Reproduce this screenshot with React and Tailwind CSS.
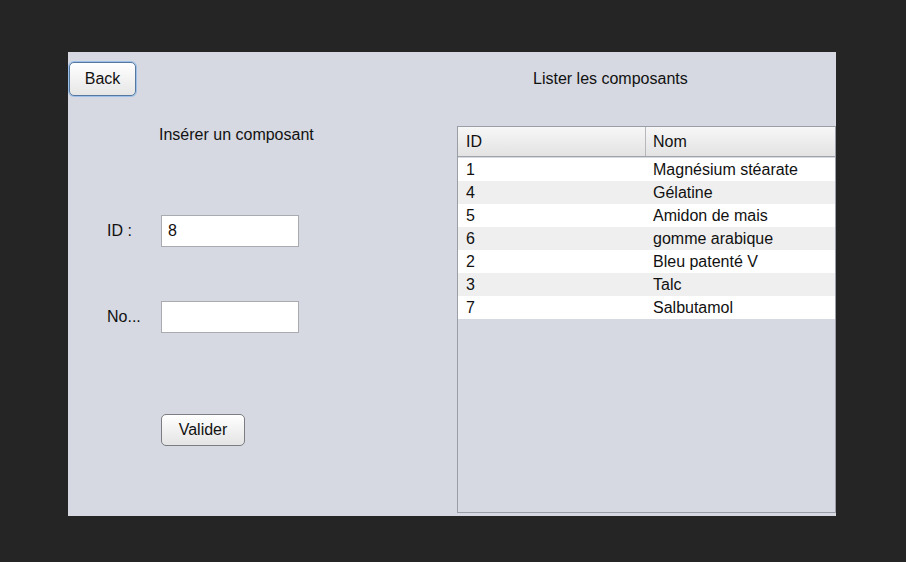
import React from "react";

const rows = [
  ["1", "Magnésium stéarate"],
  ["4", "Gélatine"],
  ["5", "Amidon de mais"],
  ["6", "gomme arabique"],
  ["2", "Bleu patenté V"],
  ["3", "Talc"],
  ["7", "Salbutamol"],
];

export default function App() {
  return (
    <div
      className="w-[906px] h-[562px] bg-[#252525] pt-[52px] pl-[68px] text-[#111]"
      style={{ fontFamily: '"Liberation Sans", Arial, sans-serif' }}
    >
      <div className="w-[768px] h-[464px] bg-[#d6d9e1] flex text-[16px]">
        {/* left */}
        <div className="w-[389px] flex flex-col">
          <div className="pt-[10px] pl-[1px]">
            <button className="w-[67px] h-[34px] rounded-[5px] border border-[#56789f] shadow-[0_0_0_1px_#9dc0ea] bg-gradient-to-b from-white to-[#e6e6e6] text-[16px] leading-none">
              Back
            </button>
          </div>
          <div className="pl-[91px] mt-[29px] h-[20px] leading-[20px]">Insérer un composant</div>
          <div className="flex items-center mt-[70px] h-[32px]">
            <span className="w-[93px] pl-[39px]">ID :</span>
            <div className="w-[138px] h-[32px] bg-white border border-[#a9abb0] pl-[6px] flex items-center">8</div>
          </div>
          <div className="flex items-center mt-[54px] h-[32px]">
            <span className="w-[93px] pl-[39px]">No...</span>
            <div className="w-[138px] h-[32px] bg-white border border-[#a9abb0]"></div>
          </div>
          <div className="pl-[93px] mt-[81px]">
            <button className="w-[84px] h-[32px] rounded-[5px] border border-[#7b7d82] bg-gradient-to-b from-white to-[#e4e4e4] text-[16px] leading-none">
              Valider
            </button>
          </div>
        </div>
        {/* right */}
        <div className="flex-1 flex flex-col">
          <div className="h-[74px] pt-[17px] leading-[20px] pl-[76px]">Lister les composants</div>
          <div className="flex-1 mb-[3px] border border-[#9a9ea6] flex flex-col">
            <div className="h-[30px] flex border-b border-[#a0a3a8] bg-gradient-to-b from-[#f7f7f7] to-[#e3e3e3]">
              <div className="w-[188px] border-r border-[#b6b8bc] pl-[8px] flex items-center">ID</div>
              <div className="flex-1 pl-[7px] flex items-center">Nom</div>
            </div>
            <div className="pt-[1px]">
              {rows.map((r, i) => (
                <div
                  key={r[0]}
                  className={`flex h-[23px] items-center pt-[1px] ${i % 2 === 0 ? "bg-white" : "bg-[#efefef]"}`}
                >
                  <div className="w-[188px] pl-[8px]">{r[0]}</div>
                  <div className="flex-1 pl-[7px]">{r[1]}</div>
                </div>
              ))}
            </div>
          </div>
        </div>
      </div>
    </div>
  );
}
